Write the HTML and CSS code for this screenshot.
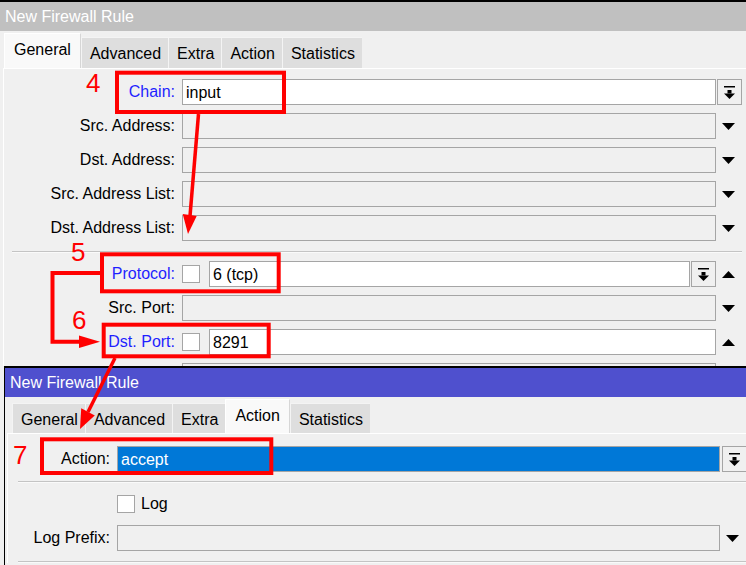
FILE: index.html
```html
<!DOCTYPE html>
<html lang="en">
<head>
  <meta charset="UTF-8">
  <title>New Firewall Rule</title>
  <link rel="stylesheet" href="styles.css">
</head>
<body>
  <div class="desk">
    <div class="win win-back">
      <div class="titlebar">New Firewall Rule</div>
      <div class="tabs">
        <div class="tab active">General</div>
        <div class="tab">Advanced</div>
        <div class="tab">Extra</div>
        <div class="tab">Action</div>
        <div class="tab">Statistics</div>
      </div>
      <div class="panel">
        <div class="row">
          <span class="lbl link">Chain:</span>
          <div class="field white">input</div>
          <div class="end"><span class="btn"><svg width="11" height="13" viewBox="0 0 11 13"><rect x="0" y="0" width="11" height="1.5"/><rect x="3.5" y="4" width="4" height="3.5"/><path d="M0 7.5H11L5.5 13Z"/></svg></span></div>
        </div>
        <div class="row">
          <span class="lbl">Src. Address:</span>
          <div class="field"></div>
          <div class="end"><svg class="tri" width="13" height="7" viewBox="0 0 13 7"><path d="M0 0H13L6.5 7Z"/></svg></div>
        </div>
        <div class="row">
          <span class="lbl">Dst. Address:</span>
          <div class="field"></div>
          <div class="end"><svg class="tri" width="13" height="7" viewBox="0 0 13 7"><path d="M0 0H13L6.5 7Z"/></svg></div>
        </div>
        <div class="row">
          <span class="lbl">Src. Address List:</span>
          <div class="field"></div>
          <div class="end"><svg class="tri" width="13" height="7" viewBox="0 0 13 7"><path d="M0 0H13L6.5 7Z"/></svg></div>
        </div>
        <div class="row">
          <span class="lbl">Dst. Address List:</span>
          <div class="field"></div>
          <div class="end"><svg class="tri" width="13" height="7" viewBox="0 0 13 7"><path d="M0 0H13L6.5 7Z"/></svg></div>
        </div>

        <div class="sep"></div>

        <div class="row">
          <span class="lbl link">Protocol:</span>
          <span class="check"></span>
          <div class="field white">6 (tcp)</div>
          <span class="btn inner"><svg width="11" height="13" viewBox="0 0 11 13"><rect x="0" y="0" width="11" height="1.5"/><rect x="3.5" y="4" width="4" height="3.5"/><path d="M0 7.5H11L5.5 13Z"/></svg></span>
          <div class="end"><svg class="tri" width="13" height="7" viewBox="0 0 13 7"><path d="M0 7H13L6.5 0Z"/></svg></div>
        </div>
        <div class="row">
          <span class="lbl">Src. Port:</span>
          <div class="field"></div>
          <div class="end"><svg class="tri" width="13" height="7" viewBox="0 0 13 7"><path d="M0 0H13L6.5 7Z"/></svg></div>
        </div>
        <div class="row">
          <span class="lbl link">Dst. Port:</span>
          <span class="check"></span>
          <div class="field white">8291</div>
          <div class="end"><svg class="tri" width="13" height="7" viewBox="0 0 13 7"><path d="M0 7H13L6.5 0Z"/></svg></div>
        </div>
        <div class="row">
          <span class="lbl"></span>
          <div class="field"></div>
          <div class="end"></div>
        </div>
      </div>
    </div>

    <div class="win win-front">
      <div class="titlebar">New Firewall Rule</div>
      <div class="tabs">
        <div class="tab">General</div>
        <div class="tab">Advanced</div>
        <div class="tab">Extra</div>
        <div class="tab active">Action</div>
        <div class="tab">Statistics</div>
      </div>
      <div class="panel">
        <div class="row">
          <span class="lbl">Action:</span>
          <div class="field selected">accept</div>
          <div class="end"><span class="btn"><svg width="11" height="13" viewBox="0 0 11 13"><rect x="0" y="0" width="11" height="1.5"/><rect x="3.5" y="4" width="4" height="3.5"/><path d="M0 7.5H11L5.5 13Z"/></svg></span></div>
        </div>

        <div class="sep"></div>

        <div class="row">
          <span class="lbl"></span>
          <span class="check"></span>
          <span class="check-text">Log</span>
        </div>
        <div class="row">
          <span class="lbl">Log Prefix:</span>
          <div class="field"></div>
          <div class="end"><svg class="tri" width="13" height="7" viewBox="0 0 13 7"><path d="M0 0H13L6.5 7Z"/></svg></div>
        </div>

        <div class="sep"></div>
      </div>
    </div>

    <!-- red callouts drawn over both windows -->
    <svg class="marks" width="746" height="565" viewBox="0 0 746 565">
      <g fill="none" stroke="#ff0000" stroke-width="4">
        <rect x="117" y="72.7" width="167" height="39.3"/>
        <rect x="102" y="254.3" width="176.7" height="37"/>
        <rect x="103.7" y="324.7" width="165" height="31.6"/>
        <rect x="42" y="439.3" width="229.3" height="33.7"/>
        <polyline points="102,273 52.5,273 52.5,341.7 84,341.7"/>
      </g>
      <g stroke="#ff0000" stroke-width="3.5">
        <line x1="198.5" y1="114" x2="190" y2="216"/>
        <line x1="115" y1="358" x2="88" y2="412"/>
      </g>
      <g fill="#ff0000">
        <polygon points="182.7,214 196.7,216 188,234"/>
        <polygon points="79,335.5 100,341.7 79,348"/>
        <polygon points="81.2,408.3 94.8,415.4 80,429"/>
      </g>
      <g class="num">
        <text x="86" y="92">4</text>
        <text x="71" y="261">5</text>
        <text x="72" y="329">6</text>
        <text x="13" y="464">7</text>
      </g>
    </svg>
  </div>
</body>
</html>
```

FILE: styles.css
```css
:root {
  --panel: #f0f0f0;
  --border: #a5a5a5;
  --link: #1f1fff;
}

body {
  margin: 0;
  background: var(--panel);
  font-family: 'Liberation Sans', Arial, sans-serif;
  font-size: 16px;
  color: #000;
}

.desk {
  position: relative;
  width: 746px;
  height: 565px;
  overflow: hidden;
  background: var(--panel);
}

.win {
  background: var(--panel);
}

.win-back {
  height: 366px;
  overflow: hidden;
  border-top: 2px solid #000;
  box-sizing: border-box;
}

.win-front {
  margin-left: 4px;
  border-left: 1px solid #000;
  border-top: 2px solid #000;
  height: 199px;
  box-sizing: border-box;
}

.titlebar {
  height: 29px;
  line-height: 30px;
  padding-left: 5px;
  color: #fff;
  background: #c0c0c0;
  white-space: nowrap;
}

.win-front .titlebar {
  background: #4f50ce;
}

/* tabs */
.tabs {
  display: flex;
  align-items: flex-end;
  height: 37px;
  padding-left: 4px;
}

.win-front .tabs {
  height: 36px;
  padding-left: 7px;
}

.tab {
  height: 30px;
  line-height: 31px;
  padding: 0 7px 0 8px;
  background: #dedede;
  border-top: 1px solid #f4f4f4;
  border-left: 1px solid #f4f4f4;
  white-space: nowrap;
}

.tab.active {
  height: 34px;
  line-height: 32px;
  padding: 0 9px 0 9px;
  background: #f9f9f9;
  border-top: 1px solid #fff;
  border-left: 1px solid #fff;
  border-right: 1px solid #d6d6d6;
}

.win-front .tab {
  height: 29px;
}

.win-front .tab.active {
  height: 33px;
}

/* panel */
.panel {
  margin-left: 3px;
  border-top: 1px solid #fff;
  border-left: 1px solid #fff;
  padding-top: 10px;
}

.win-front .panel {
  margin-left: 2px;
  padding-top: 12px;
}

.row {
  display: flex;
  align-items: center;
  height: 26px;
  margin-bottom: 8px;
}

.lbl {
  flex: none;
  width: 171px;
  margin-right: 7px;
  text-align: right;
  white-space: nowrap;
}

.win-front .lbl {
  width: 102px;
}

.lbl.link {
  color: var(--link);
}

.field {
  flex: 1;
  height: 26px;
  line-height: 26px;
  box-sizing: border-box;
  padding-left: 3px;
  border: 1px solid var(--border);
  background: var(--panel);
  white-space: nowrap;
}

.field.white {
  background: #fff;
}

.field.selected {
  background: #0078d7;
  color: #fff;
}

.check {
  flex: none;
  width: 18px;
  height: 18px;
  box-sizing: border-box;
  margin-right: 9px;
  border: 1px solid var(--border);
  background: #fff;
}

.check-text {
  margin-left: -3px;
}

.end {
  flex: none;
  width: 30px;
  height: 26px;
  display: flex;
  align-items: center;
}

.win-front .end {
  width: 26px;
}

.btn {
  flex: none;
  display: flex;
  align-items: center;
  justify-content: center;
  width: 25px;
  height: 26px;
  box-sizing: border-box;
  margin-left: 1px;
  border: 1px solid var(--border);
  background: var(--panel);
}

.win-front .btn {
  margin-left: 2px;
}

.btn.inner {
  margin-left: 1px;
}

.tri {
  margin-left: 6px;
}

/* etched separator; margins collapse with the row above */
.sep {
  height: 1px;
  margin: 10px 4px 8px 8px;
  background: #c4c4c4;
  border-bottom: 1px solid #fafafa;
}

.win-front .sep {
  margin: 9px 0 8px 10px;
}

.win-front .sep:last-child {
  margin-top: 10px;
}

.marks {
  position: absolute;
  top: 0;
  left: 0;
}

.num text {
  fill: #ff0000;
  font-family: 'Liberation Sans', Arial, sans-serif;
  font-size: 26px;
}
```
